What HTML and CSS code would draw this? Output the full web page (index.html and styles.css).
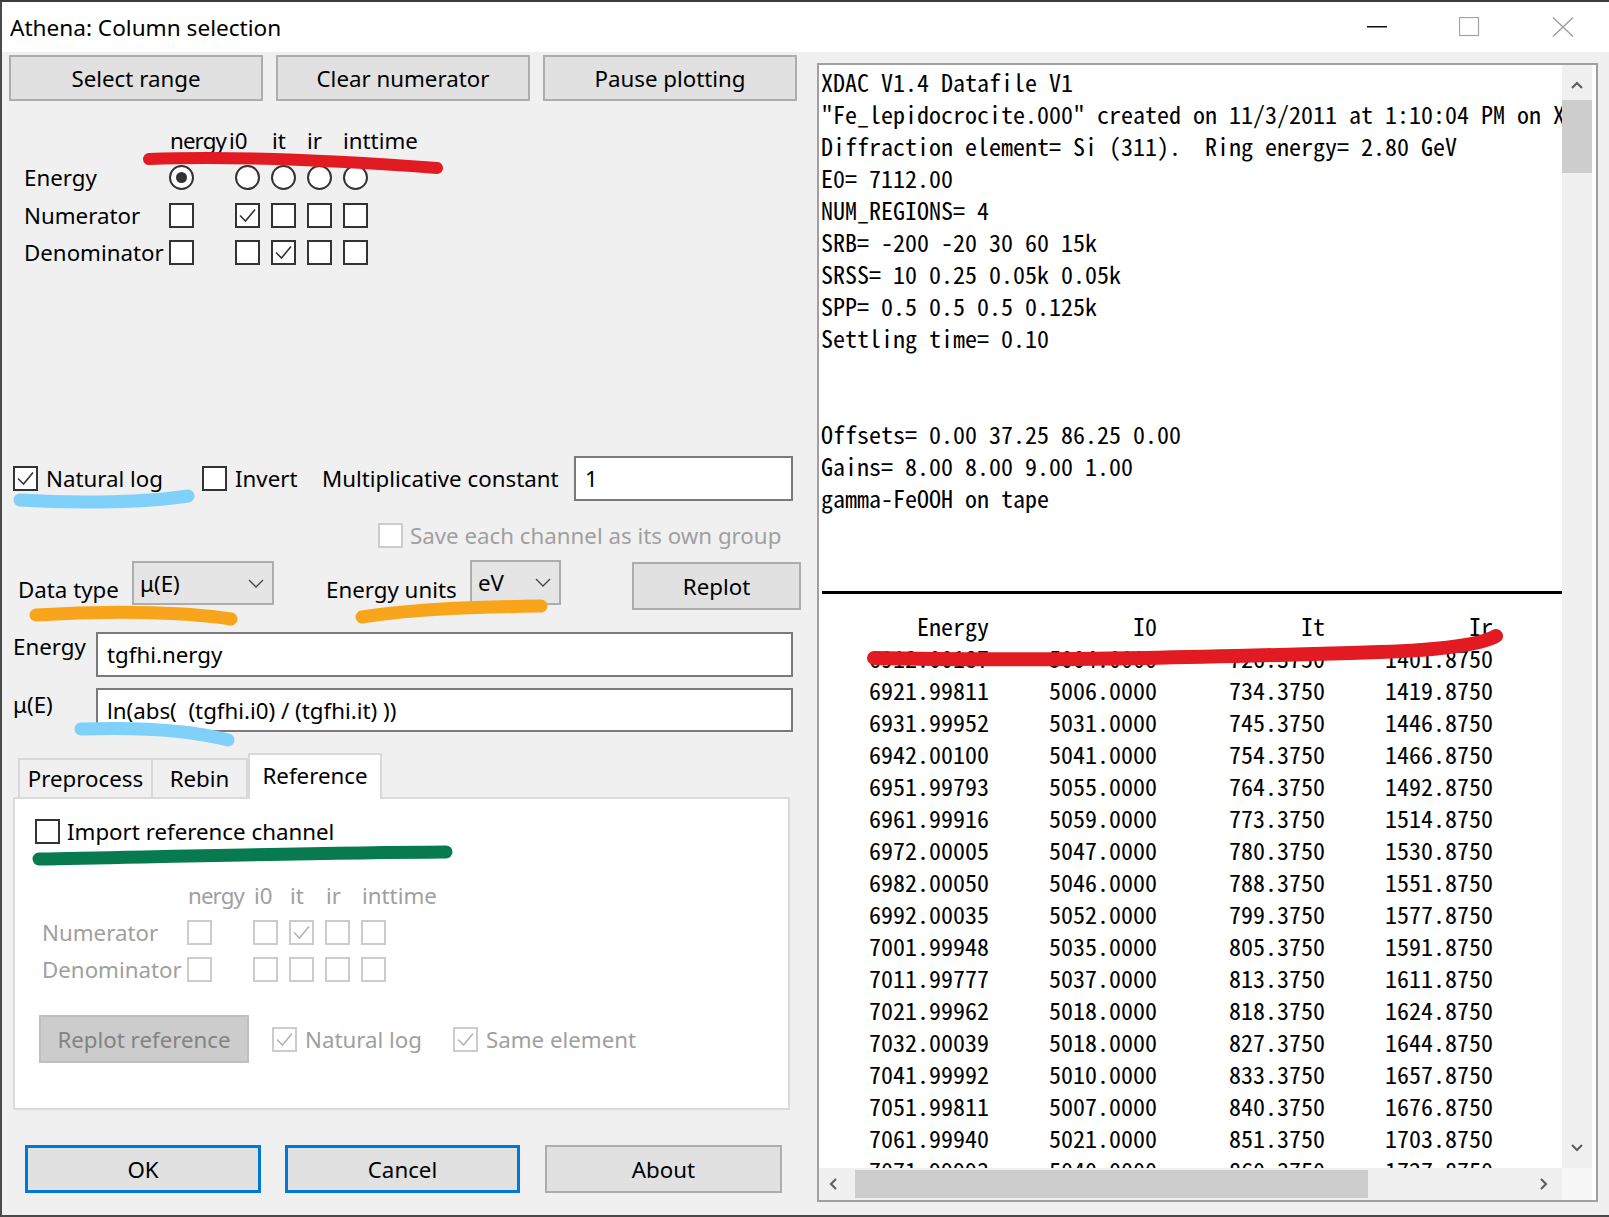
FILE: index.html
```html
<!DOCTYPE html>
<html>
<head>
<meta charset="utf-8">
<title>Athena: Column selection</title>
<link rel="stylesheet" href="styles.css">
</head>
<body>
<div class="window">
  <div class="titlebar">
    <div class="title">Athena: Column selection</div>
    <div class="caps">
      <div class="cap"><svg width="20" height="2" viewBox="0 0 20 2"><rect x="0" y="0" width="20" height="1.5" fill="#111"/></svg></div>
      <div class="cap"><svg width="21" height="20" viewBox="0 0 21 20"><rect x="0.5" y="0.5" width="19" height="18" fill="none" stroke="#a3a3a3" stroke-width="1.2"/></svg></div>
      <div class="cap"><svg width="22" height="20" viewBox="0 0 22 20"><path d="M1 0.5 L21 19.5 M21 0.5 L1 19.5" stroke="#9a9a9a" stroke-width="1.3" fill="none"/></svg></div>
    </div>
  </div>

  <div class="main">
    <div class="left">
      <div class="toolbar">
        <div class="btn tb">Select range</div>
        <div class="btn tb">Clear numerator</div>
        <div class="btn tb">Pause plotting</div>
      </div>

      <div class="grid">
        <div class="ghead">
          <span class="h57 tight">nergy</span><span class="h44">i0</span><span class="h35">it</span><span class="h36">ir</span><span>inttime</span>
        </div>
        <div class="grow">
          <div class="glabel">Energy</div>
          <div class="gc0"><span class="rb on"></span></div>
          <div class="gc"><span class="rb"></span></div>
          <div class="gc"><span class="rb"></span></div>
          <div class="gc"><span class="rb"></span></div>
          <div class="gc"><span class="rb"></span></div>
        </div>
        <div class="grow">
          <div class="glabel">Numerator</div>
          <div class="gc0"><span class="cb"></span></div>
          <div class="gc"><span class="cb"><svg width="21" height="21" viewBox="0 0 21 21"><polyline points="3,10.5 8.5,16 18,4.5" fill="none" stroke="#333" stroke-width="1.6"/></svg></span></div>
          <div class="gc"><span class="cb"></span></div>
          <div class="gc"><span class="cb"></span></div>
          <div class="gc"><span class="cb"></span></div>
        </div>
        <div class="grow">
          <div class="glabel">Denominator</div>
          <div class="gc0"><span class="cb"></span></div>
          <div class="gc"><span class="cb"></span></div>
          <div class="gc"><span class="cb"><svg width="21" height="21" viewBox="0 0 21 21"><polyline points="3,10.5 8.5,16 18,4.5" fill="none" stroke="#333" stroke-width="1.6"/></svg></span></div>
          <div class="gc"><span class="cb"></span></div>
          <div class="gc"><span class="cb"></span></div>
        </div>
      </div>

      <div class="optrow">
        <div class="chk w189"><span class="cb"><svg width="21" height="21" viewBox="0 0 21 21"><polyline points="3,10.5 8.5,16 18,4.5" fill="none" stroke="#333" stroke-width="1.6"/></svg></span><span>Natural log</span></div>
        <div class="chk w120"><span class="cb"></span><span>Invert</span></div>
        <div class="mclabel">Multiplicative constant</div>
        <div class="input mcin">1</div>
      </div>

      <div class="saverow">
        <div class="chk"><span class="cb off"></span><span>Save each channel as its own group</span></div>
      </div>

      <div class="datarow">
        <div class="dlabel w114">Data type</div>
        <div class="combo combo1"><span>μ(E)</span><svg width="16" height="9" viewBox="0 0 16 9"><path d="M1 1 L8 8 L15 1" fill="none" stroke="#444" stroke-width="1.3"/></svg></div>
        <div class="dlabel w144 ml52">Energy units</div>
        <div class="combo combo2"><span>eV</span><svg width="16" height="9" viewBox="0 0 16 9"><path d="M1 1 L8 8 L15 1" fill="none" stroke="#444" stroke-width="1.3"/></svg></div>
        <div class="btn replot">Replot</div>
      </div>

      <div class="exprrow e1">
        <div class="elabel">Energy</div>
        <div class="input ebox">tgfhi.nergy</div>
      </div>
      <div class="exprrow e2">
        <div class="elabel">μ(E)</div>
        <div class="input ebox">ln(abs(&nbsp; (tgfhi.i0) / (tgfhi.it) ))</div>
      </div>

      <div class="tabs">
        <div class="tab t1">Preprocess</div>
        <div class="tab t2">Rebin</div>
        <div class="tab sel">Reference</div>
      </div>
      <div class="panel">
        <div class="improw"><span class="cb"></span><span>Import reference channel</span></div>
        <div class="grid sub">
          <div class="ghead">
            <span class="h66 tight">nergy</span><span class="h36">i0</span><span class="h36">it</span><span class="h36">ir</span><span>inttime</span>
          </div>
          <div class="grow">
            <div class="glabel">Numerator</div>
            <div class="gc0"><span class="cb off"></span></div>
            <div class="gc"><span class="cb off"></span></div>
            <div class="gc"><span class="cb off"><svg width="21" height="21" viewBox="0 0 21 21"><polyline points="3,10.5 8.5,16 18,4.5" fill="none" stroke="#b4b4b4" stroke-width="1.6"/></svg></span></div>
            <div class="gc"><span class="cb off"></span></div>
            <div class="gc"><span class="cb off"></span></div>
          </div>
          <div class="grow">
            <div class="glabel">Denominator</div>
            <div class="gc0"><span class="cb off"></span></div>
            <div class="gc"><span class="cb off"></span></div>
            <div class="gc"><span class="cb off"></span></div>
            <div class="gc"><span class="cb off"></span></div>
            <div class="gc"><span class="cb off"></span></div>
          </div>
        </div>
        <div class="reprow">
          <div class="btn rbtn">Replot reference</div>
          <div class="chk dis w181 ml23"><span class="cb off"><svg width="21" height="21" viewBox="0 0 21 21"><polyline points="3,10.5 8.5,16 18,4.5" fill="none" stroke="#b4b4b4" stroke-width="1.6"/></svg></span><span>Natural log</span></div>
          <div class="chk dis"><span class="cb off"><svg width="21" height="21" viewBox="0 0 21 21"><polyline points="3,10.5 8.5,16 18,4.5" fill="none" stroke="#b4b4b4" stroke-width="1.6"/></svg></span><span>Same element</span></div>
        </div>
      </div>

      <div class="bottom">
        <div class="btn ok">OK</div>
        <div class="btn cancel">Cancel</div>
        <div class="btn about">About</div>
      </div>
    </div>

    <div class="right">
      <div class="tbox">
        <div class="text">
<pre>XDAC V1.4 Datafile V1
"Fe_lepidocrocite.000" created on 11/3/2011 at 1:10:04 PM on X
Diffraction element= Si (311).  Ring energy= 2.80 GeV
E0= 7112.00
NUM_REGIONS= 4
SRB= -200 -20 30 60 15k
SRSS= 10 0.25 0.05k 0.05k
SPP= 0.5 0.5 0.5 0.125k
Settling time= 0.10


Offsets= 0.00 37.25 86.25 0.00
Gains= 8.00 8.00 9.00 1.00
gamma-FeOOH on tape

 </pre>
<div class="rule"><div class="ruleline"></div></div>
<pre>        Energy            I0            It            Ir
    6912.00187     5004.0000      726.3750     1401.8750
    6921.99811     5006.0000      734.3750     1419.8750
    6931.99952     5031.0000      745.3750     1446.8750
    6942.00100     5041.0000      754.3750     1466.8750
    6951.99793     5055.0000      764.3750     1492.8750
    6961.99916     5059.0000      773.3750     1514.8750
    6972.00005     5047.0000      780.3750     1530.8750
    6982.00050     5046.0000      788.3750     1551.8750
    6992.00035     5052.0000      799.3750     1577.8750
    7001.99948     5035.0000      805.3750     1591.8750
    7011.99777     5037.0000      813.3750     1611.8750
    7021.99962     5018.0000      818.3750     1624.8750
    7032.00039     5018.0000      827.3750     1644.8750
    7041.99992     5010.0000      833.3750     1657.8750
    7051.99811     5007.0000      840.3750     1676.8750
    7061.99940     5021.0000      851.3750     1703.8750
    7071.99993     5040.0000      860.3750     1727.8750</pre>
        </div>
        <div class="vscroll">
          <div class="varrow"><svg width="12" height="8" viewBox="0 0 12 8"><path d="M1 7 L6 2 L11 7" fill="none" stroke="#606060" stroke-width="2.2"/></svg></div>
          <div class="vthumb"></div>
          <div class="vspace"></div>
          <div class="varrow"><svg width="12" height="8" viewBox="0 0 12 8"><path d="M1 1 L6 6 L11 1" fill="none" stroke="#606060" stroke-width="2.2"/></svg></div>
        </div>
        <div class="hscroll">
          <div class="harrow hl"><svg width="8" height="12" viewBox="0 0 8 12"><path d="M7 1 L2 6 L7 11" fill="none" stroke="#606060" stroke-width="2.2"/></svg></div>
          <div class="hthumb"></div>
          <div class="hspace"></div>
          <div class="harrow hr"><svg width="8" height="12" viewBox="0 0 8 12"><path d="M1 1 L6 6 L1 11" fill="none" stroke="#606060" stroke-width="2.2"/></svg></div>
        </div>
        <div class="corner"></div>
      </div>
    </div>
  </div>

  <svg class="marks" width="1609" height="1217" viewBox="0 0 1609 1217">
    <g fill="none" stroke-linecap="round">
      <path d="M149,159 C230,156 330,160 437,168" stroke="#e21b22" stroke-width="12"/>
      <path d="M20,500 C80,504 150,502 188,496" stroke="#7fd1f9" stroke-width="13"/>
      <path d="M36,615 C100,611 180,611 231,619" stroke="#f8a51b" stroke-width="13"/>
      <path d="M362,617 C420,608 480,607 541,606" stroke="#f8a51b" stroke-width="13"/>
      <path d="M81,729 C140,727 190,730 228,740" stroke="#7fd1f9" stroke-width="13"/>
      <path d="M39,859 C150,857 300,853 446,852" stroke="#077a4f" stroke-width="13"/>
      <path d="M874,658 C1050,662 1250,656 1380,652 C1440,650 1480,645 1496,636" stroke="#e21b22" stroke-width="14"/>
    </g>
  </svg>
</div>
</body>
</html>
```
FILE: styles.css
```css
html, body { margin: 0; padding: 0; }
body {
  font-family: "Noto Sans", "Open Sans", sans-serif;
  font-size: 22.3px;
  color: #000;
  background: #f0f0f0;
}
.window {
  position: relative;
  width: 1609px;
  height: 1217px;
  box-sizing: border-box;
  border-top: 2px solid #3b3b3b;
  border-left: 2px solid #4a4a4a;
  border-bottom: 2px solid #4a4a4a;
  background: #f0f0f0;
  display: flex;
  flex-direction: column;
  overflow: hidden;
}
.titlebar { height: 50px; flex: none; background: #fff; display: flex; align-items: center; }
.title { padding-left: 8px; white-space: nowrap; font-size: 22.6px; }
.caps { margin-left: auto; display: flex; height: 50px; }
.cap { width: 93px; display: flex; align-items: center; justify-content: center; }
.cap svg { display: block; }

.main { flex: 1; display: flex; min-height: 0; }
.left { width: 806px; flex: none; }

.btn {
  box-sizing: border-box;
  background: #e1e1e1;
  border: 2px solid #adadad;
  display: flex;
  align-items: center;
  justify-content: center;
  white-space: nowrap;
  flex: none;
}
.toolbar { display: flex; gap: 13px; margin: 3px 0 0 7px; }
.tb { width: 254px; height: 46px; }

/* column grid */
.grid { margin: 21px 0 0 22px; }
.ghead { height: 37px; line-height: 37px; padding-left: 146px; display: flex; white-space: nowrap; }
.ghead span { display: block; flex: none; }
.tight { letter-spacing: -0.9px; }
.h57 { width: 59px; } .h44 { width: 43px; } .h35 { width: 35px; } .h36 { width: 36px; } .h66 { width: 66px; }
.grow { height: 37.5px; display: flex; align-items: center; }
.glabel { width: 145px; flex: none; white-space: nowrap; }
.gc0 { width: 66px; flex: none; display: flex; }
.gc { width: 36px; flex: none; display: flex; }

.cb {
  width: 25px; height: 25px; box-sizing: border-box;
  border: 2px solid #333; background: #fff; display: block; flex: none;
}
.cb svg { display: block; }
.cb.off { border-color: #cccccc; }
.rb {
  width: 25px; height: 25px; box-sizing: border-box;
  border: 2px solid #333; border-radius: 50%; background: #fff;
  display: flex; align-items: center; justify-content: center; flex: none;
}
.rb.on::after { content: ""; width: 11px; height: 11px; border-radius: 50%; background: #333; }

.chk { display: flex; align-items: center; gap: 8px; flex: none; white-space: nowrap; }
.w189 { width: 189px; } .w120 { width: 120px; } .w181 { width: 181px; }
.ml23 { margin-left: 23px; }

.optrow { margin-top: 183.5px; height: 46px; display: flex; align-items: center; padding-left: 11px; }
.mclabel { width: 252px; flex: none; white-space: nowrap; }
.input {
  box-sizing: border-box; border: 2px solid #7a7a7a; background: #fff;
  display: flex; align-items: center; padding-left: 9px; flex: none; white-space: nowrap;
}
.mcin { width: 219px; height: 45px; }

.saverow { margin-top: 17px; height: 34px; display: flex; align-items: center; padding-left: 376px; color: #a0a0a0; }
.saverow .chk { gap: 7px; }

.datarow { margin-top: 9px; height: 49px; display: flex; align-items: flex-start; padding-left: 16px; }
.dlabel { line-height: 30px; margin-top: 14px; flex: none; white-space: nowrap; }
.w114 { width: 114px; } .w144 { width: 144px; } .ml52 { margin-left: 52px; }
.combo {
  box-sizing: border-box; background: #e5e5e5; border: 2px solid #adadad;
  display: flex; align-items: center; padding-left: 6px; flex: none;
}
.combo svg { margin-left: auto; margin-right: 8px; display: block; }
.combo1 { width: 142px; height: 44px; }
.combo2 { width: 91px; height: 45px; margin-top: -1px; }
.replot { margin-left: 71px; width: 169px; height: 48px; margin-top: 1px; }

.exprrow { display: flex; align-items: flex-start; padding-left: 11px; }
.e1 { margin-top: 22px; }
.e2 { margin-top: 11px; }
.elabel { width: 83px; line-height: 30px; flex: none; }
.e2 .elabel { margin-top: 2px; }
.ebox { width: 697px; height: 45px; }
.e2 .ebox { height: 44px; }

.tabs { margin-top: 21px; height: 44px; display: flex; align-items: flex-end; padding-left: 16px; }
.tab {
  box-sizing: border-box; height: 39px; border: 2px solid #d9d9d9; border-bottom: none;
  background: #f0f0f0; display: flex; align-items: center; justify-content: center; flex: none;
}
.t1 { width: 135px; }
.t2 { width: 95px; border-left: none; }
.tab.sel { width: 134px; height: 46px; background: #fff; margin-bottom: -2px; position: relative; z-index: 1; padding-bottom: 4px; }

.panel {
  margin-left: 11px; width: 777px; height: 313px; box-sizing: border-box;
  border: 2px solid #dadada; background: #fff;
}
.improw { margin-top: 18px; height: 28px; display: flex; align-items: center; gap: 7px; padding-left: 20px; }
.grid.sub { margin: 31.5px 0 0 27px; color: #a0a0a0; }
.sub .ghead { padding-left: 146px; }
.reprow { margin-top: 26.5px; height: 48px; display: flex; align-items: center; padding-left: 24px; }
.rbtn { width: 210px; height: 48px; background: #cccccc; border-color: #bfbfbf; color: #838383; }
.dis { color: #a0a0a0; }

.bottom { margin-top: 35px; display: flex; padding-left: 23px; }
.ok { width: 236px; height: 48px; border: 3px solid #0078d7; }
.cancel { width: 235px; height: 48px; margin-left: 24px; border: 3px solid #0078d7; }
.about { width: 237px; height: 48px; margin-left: 25px; }

/* right text view */
.right { flex: 1; display: flex; padding: 11px 11px 13px 9px; min-width: 0; }
.tbox {
  flex: 1; min-width: 0; min-height: 0;
  border: 2px solid #a0a0a0; background: #fff;
  display: grid; grid-template-columns: minmax(0, 1fr) 34px; grid-template-rows: minmax(0, 1fr) 32px;
}
.text {
  overflow: hidden; padding: 1px 0 0 2px;
  font-family: "Noto Sans Mono CJK SC", "Liberation Mono", monospace;
  font-size: 24px; line-height: 32px; color: #000;
}
.text pre { margin: 0; font: inherit; white-space: pre; }
.rule { height: 32px; box-sizing: border-box; padding-top: 13px; }
.ruleline { height: 3px; background: #000; margin-left: 1px; }

.vscroll { margin-right: 4px; background: #f0f0f0; display: flex; flex-direction: column; }
.varrow { height: 40px; flex: none; display: flex; align-items: center; justify-content: center; }
.varrow svg, .harrow svg { display: block; }
.vthumb { height: 73px; margin-top: -5px; background: #cdcdcd; flex: none; }
.vspace { flex: 1; }
.hscroll { background: #f0f0f0; display: flex; }
.harrow { display: flex; align-items: center; justify-content: center; flex: none; }
.hl { width: 28px; }
.hr { width: 36px; }
.hthumb { width: 513px; margin: 2px 0 2px 8px; background: #cdcdcd; flex: none; }
.hspace { flex: 1; }
.corner { background: #f7f7f7; margin-right: 4px; }

.marks { position: absolute; left: -2px; top: -2px; pointer-events: none; z-index: 5; }
```
